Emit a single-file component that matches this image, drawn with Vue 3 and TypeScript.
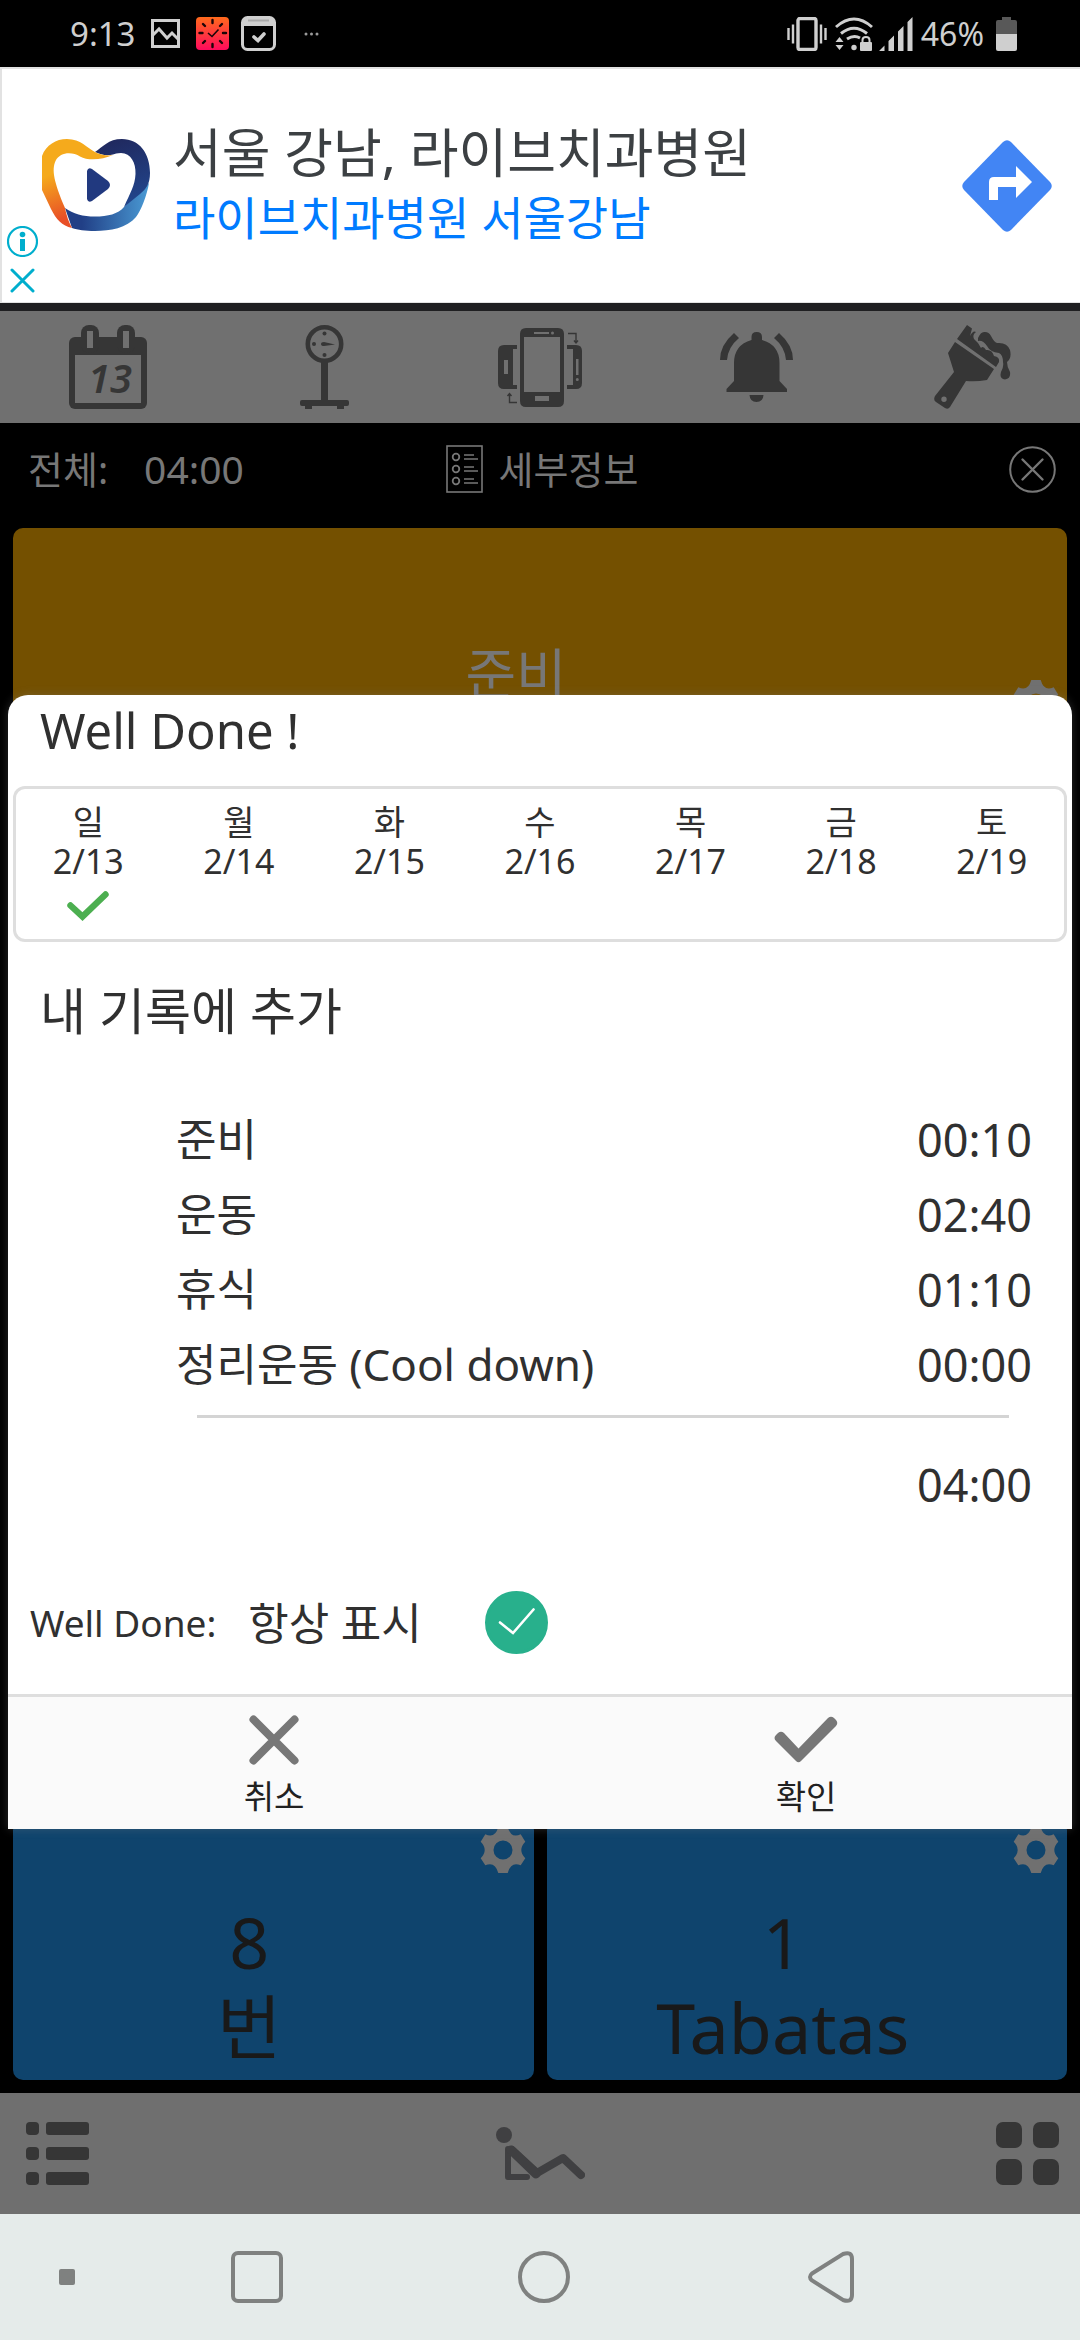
<script setup lang="ts">
import { ref } from 'vue'

interface Day {
  name: string
  date: string
  done: boolean
}

interface Segment {
  label: string
  time: string
}

interface Counter {
  value: string
  unit: string
}

const week: Day[] = [
  { name: '일', date: '2/13', done: true },
  { name: '월', date: '2/14', done: false },
  { name: '화', date: '2/15', done: false },
  { name: '수', date: '2/16', done: false },
  { name: '목', date: '2/17', done: false },
  { name: '금', date: '2/18', done: false },
  { name: '토', date: '2/19', done: false },
]

const segments: Segment[] = [
  { label: '준비', time: '00:10' },
  { label: '운동', time: '02:40' },
  { label: '휴식', time: '01:10' },
  { label: '정리운동 (Cool down)', time: '00:00' },
]

const counters: Counter[] = [
  { value: '8', unit: '번' },
  { value: '1', unit: 'Tabatas' },
]

const gearPath =
  'M18.3 0H27.7Q31 12 40.7 7.3L45.3 14.7Q37.3 23 45.3 31.3L40.7 38.3Q31 34 27.7 46H18.3Q15 34 5.3 38.3L.7 31.3Q8.7 23 .7 14.7L5.3 7.3Q15 12 18.3 0ZM23 13.5a9.5 9.5 0 1 0 0 19a9.5 9.5 0 1 0 0-19Z'

const alwaysShow = ref(true)
</script>

<template>
  <div class="page">
    <header class="status">
      <span class="clock">9:13</span>
      <svg class="st-image" width="29" height="29" viewBox="0 0 29 29" fill="none" stroke="#cfcfcf">
        <rect x="1.5" y="1.5" width="26" height="26" stroke-width="3" />
        <path d="M1 17L8 10L16 19L21 14L28 21" stroke-width="3" />
      </svg>
      <svg class="st-watch" width="33" height="33" viewBox="0 0 33 33">
        <defs>
          <linearGradient id="watch" x1="0" y1="0" x2="0" y2="1">
            <stop offset="0" stop-color="#ff6a1c" />
            <stop offset="1" stop-color="#ff0a5c" />
          </linearGradient>
        </defs>
        <rect width="33" height="33" rx="4" fill="url(#watch)" />
        <path d="M12 16L16 19.500L22.500 12.500" fill="none" stroke="#1a0508" stroke-width="1.600" />
        <path d="M16.500 3v3M16.500 27v3M3.500 16h3M27 16h3M7 7l2 2M24 9l2-2M7 26l2-2M24 24l2 2" stroke="#1a0508" stroke-width="2.400" stroke-linecap="round" />
      </svg>
      <svg class="st-cal" width="35" height="35" viewBox="0 0 35 35">
        <rect x="1.500" y="1.500" width="32" height="32" rx="5" fill="#000" stroke="#cfcfcf" stroke-width="3" />
        <path d="M2 10V5Q2 2 5 2H30Q33 2 33 5V10Z" fill="#cfcfcf" />
        <path d="M7 4.500H28" stroke="#aaa" stroke-width="2" />
        <path d="M13 21L17 24.500L23 18" fill="none" stroke="#cfcfcf" stroke-width="3.600" stroke-linecap="round" />
      </svg>
      <svg class="st-more" width="15" height="4" viewBox="0 0 15 4" fill="#9a9a9a">
        <circle cx="2" cy="2" r="1.500" /><circle cx="7.500" cy="2" r="1.500" /><circle cx="13" cy="2" r="1.500" />
      </svg>
      <svg class="st-vibrate" width="40" height="34" viewBox="0 0 40 34">
        <rect x="11" y="1.500" width="18" height="31" rx="2" fill="none" stroke="#cfcfcf" stroke-width="3.400" />
        <path d="M1.500 11V23M6 7.500V26.500M34 7.500V26.500M38.500 11V23" stroke="#cfcfcf" stroke-width="2.400" />
      </svg>
      <svg class="st-wifi" width="38" height="34" viewBox="0 0 38 34">
        <g fill="none" stroke="#cfcfcf" stroke-width="3">
          <path d="M1 10Q19-6 37 10" /><path d="M6 16.500Q19 6 32 16.500" /><path d="M12 22Q19 17.500 25 21" />
        </g>
        <circle cx="19" cy="30.500" r="2.700" fill="#cfcfcf" />
        <path d="M.500 25L4.500 20L8.500 25ZM.500 28L4.500 33L8.500 28Z" fill="#cfcfcf" />
        <rect x="25" y="25" width="12" height="9" rx="1" fill="#cfcfcf" />
        <path d="M27.500 26V23Q27.500 20 31 20T34.500 23V26" fill="none" stroke="#cfcfcf" stroke-width="2" />
      </svg>
      <svg class="st-signal" width="34" height="34" viewBox="0 0 34 34" fill="#cfcfcf">
        <path d="M0 34L5.500 28.500V34ZM9.500 24L15 18.500V34H9.500ZM19 14.500L24.500 9V34H19ZM28.500 5L33.500 0V34H28.500Z" />
      </svg>
      <span class="percent">46%</span>
      <svg class="st-battery" width="21" height="34" viewBox="0 0 21 34">
        <path d="M6 0H15V3H19Q21 3 21 5V18H0V5Q0 3 2 3H6Z" fill="#585858" />
        <path d="M0 17H21V32Q21 34 19 34H2Q0 34 0 32Z" fill="#cfcfcf" />
      </svg>
    </header>

    <aside class="ad">
      <svg class="ad-logo" width="108" height="93" viewBox="0 0 108 93">
        <defs>
          <linearGradient id="orange" x1="0" y1="0" x2=".3" y2="1">
            <stop offset=".4" stop-color="#f5aa1c" />
            <stop offset=".9" stop-color="#e84f27" />
          </linearGradient>
          <linearGradient id="navy" x1="0" y1="0" x2=".3" y2="1">
            <stop offset="0" stop-color="#20265a" />
            <stop offset="1" stop-color="#214389" />
          </linearGradient>
          <linearGradient id="blue" x1="0" y1="0" x2="1" y2="0">
            <stop offset=".2" stop-color="#213f86" />
            <stop offset="1" stop-color="#4a9ad4" />
          </linearGradient>
        </defs>
        <path d="M107 44C105 56 99 72 94 78C85 89 68 92 53 92C43 92 36 91 30 89L23 69C31 75 41 77.500 53 77.500C66 77.500 76 75 82 68Z" fill="url(#blue)" />
        <path d="M53 13C61 8 66 0 80 0C97 0 108 14 108 34C108 45 104 50 98 55L82 68C88 54 93 47 93.500 35C94 24 89 14 79 14C75 14 73 15 71 15.500C65 17 59 16 53 13Z" fill="url(#navy)" />
        <path d="M71 16C60 21 46 22 38 17.500C30 12.500 18 13 13.500 22C9.500 31 12 43 23 69Q25 80 30 89C20 87 14 80 9 70L0 51V17C4 6 14 0 25 0C39 0 45 9 53 13C58 16 66 17 71 16Z" fill="url(#orange)" />
        <path d="M45 32Q46 28 50 30L66 42Q70 46 66 50L50 62Q46 64 45 60Z" fill="#21397f" />
      </svg>
      <div class="ad-text">
        <p class="ad-title">서울 강남, 라이브치과병원</p>
        <a class="ad-link" href="#">라이브치과병원 서울강남</a>
      </div>
      <svg class="ad-route" width="90" height="92" viewBox="0 0 90 92">
        <path d="M41 2Q45-1.500 49 2L88 42Q91.500 46 88 50L49 90Q45 93.500 41 90L2 50Q-1.500 46 2 42Z" fill="#4285f4" />
        <path d="M27 60V42Q27 37 32 37H54V26L70 42L54 58V47H36V60Z" fill="#fff" />
      </svg>
      <div class="ad-choices">
        <svg width="31" height="31" viewBox="0 0 31 31">
          <circle cx="15.500" cy="15.500" r="14.500" fill="none" stroke="#00aecd" stroke-width="2.200" />
          <circle cx="15.500" cy="8.500" r="2.800" fill="#00aecd" />
          <rect x="13" y="13" width="5" height="12" fill="#00aecd" />
        </svg>
        <svg width="25" height="25" viewBox="0 0 25 25">
          <path d="M2 2L23 23M23 2L2 23" stroke="#00aecd" stroke-width="3" stroke-linecap="round" />
        </svg>
      </div>
    </aside>

    <section class="app">
      <nav class="toolbar">
        <button type="button" aria-label="calendar">
          <svg width="78" height="84" viewBox="0 0 78 84">
            <rect y="12" width="78" height="72" rx="6" fill="#363636" />
            <rect x="12" width="18" height="28" rx="8" fill="#363636" />
            <rect x="48" width="18" height="28" rx="8" fill="#363636" />
            <path d="M18 6h6v17h-6ZM54 6h6v17h-6ZM6 30H72V78H6Z" fill="#707070" />
            <text x="41" y="68" text-anchor="middle" class="cal-number">13</text>
          </svg>
        </button>
        <button type="button" aria-label="weight">
          <svg width="49" height="84" viewBox="0 0 49 84" fill="#363636">
            <circle cx="24.500" cy="19" r="16.700" fill="none" stroke="#363636" stroke-width="4.600" />
            <circle cx="24.500" cy="8.500" r="2" /><circle cx="24.500" cy="30" r="2" /><circle cx="14" cy="19" r="2" />
            <path d="M35 19.500L24 21Q21 21 21 19T24 17Z" />
            <path d="M21 36H28V75H47Q49 75 49 77V79Q49 81 47 81H44V84H37V81H12V84H5V81H2Q0 81 0 79V77Q0 75 2 75H21Z" />
          </svg>
        </button>
        <button type="button" aria-label="rotate">
          <svg width="84" height="79" viewBox="0 0 84 79" fill="#363636">
            <path fill-rule="evenodd" d="M28 0H60Q66 0 66 6V73Q66 79 60 79H28Q22 79 22 73V6Q22 0 28 0ZM26 9V64H62V9ZM36 4V6H51V4ZM54.500 3.500a1.500 1.500 0 1 0 0 3a1.500 1.500 0 1 0 0-3ZM37 68V73H51V68Z" />
            <path fill-rule="evenodd" d="M6 17H19V21H15V57H19V61H6Q0 61 0 55V23Q0 17 6 17ZM6 32V46H10V32Z" />
            <path fill-rule="evenodd" d="M69 17H78Q84 17 84 23V55Q84 61 78 61H69V57H75V21H69ZM78 31V47H80.500V31ZM79.300 50a1.500 1.500 0 1 0 0 3a1.500 1.500 0 1 0 0-3Z" />
            <path d="M19 74.500H11.500V66M9.500 68L11.500 65.500L13.500 68M70 5.500H78V14M76 12.500L78 15L80 12.500" fill="none" stroke="#363636" stroke-width="1.400" />
          </svg>
        </button>
        <button type="button" aria-label="alarm">
          <svg width="73" height="70" viewBox="0 0 73 70" fill="#363636">
            <path d="M31.500 8V5Q31.500 0 36.700 0T42 5V8Q59.500 13 59.500 31V49L67 57V60H6.500V57L14 49V31Q14 13 31.500 8ZM29.500 63H43.500Q43 70 36.500 70T29.500 63Z" />
            <path d="M0 28Q0 13 14 1L19 6Q8 15 7 28ZM73 28Q73 13 59 1L54 6Q65 15 66 28Z" />
          </svg>
        </button>
        <button type="button" aria-label="theme">
          <svg width="77" height="84" viewBox="0 0 77 84" fill="#363636">
            <path fill-rule="evenodd" d="M21 17L60 44L53 55Q42 57 32 56L16 82Q14 85 11 83L2 77Q-1 75 1 71L20 47L14 28ZM10 71.500a2.700 2.700 0 1 0 0 5.400a2.700 2.700 0 1 0 0-5.400Z" />
            <path d="M23 14L33 0L38 3.500L36 11Q39 5 42 7Q38 10 40 14Q44 17 47 23Q49 20 52 25Q58 24 60 31Q66 32 65 37L62 42Z" />
            <path d="M44 13Q47 6 51 7Q55 7 57 11Q60 17 63 18Q73 17 76 25Q78 33 73 37Q73 42 76 47Q77 54 71 54.500Q65 54 67 47Q70 42 69 37Q69 30 65 28Q56 27 53 21Q49 15 44 16Z" />
          </svg>
        </button>
      </nav>

      <div class="summary">
        <div class="total">
          <span>전체:</span>
          <span class="total-time">04:00</span>
        </div>
        <button type="button" class="details">
          <svg width="37" height="48" viewBox="0 0 37 48" fill="none" stroke="#777">
            <rect x="1" y="1" width="35" height="46" stroke-width="1.600" />
            <g stroke-width="1.800">
              <circle cx="10" cy="12" r="3.300" /><circle cx="10" cy="24" r="3.300" /><circle cx="10" cy="36" r="3.300" />
            </g>
            <path d="M18 10H28M18 14H32M18 22H28M18 26H32M18 34H28M18 38H32" stroke-width="1.400" />
          </svg>
          <span>세부정보</span>
        </button>
        <button type="button" class="close" aria-label="close">
          <svg width="47" height="47" viewBox="0 0 47 47" fill="none" stroke="#777" stroke-width="2">
            <circle cx="23.500" cy="23.500" r="22.300" />
            <path d="M13.500 13.500L33.500 33.500M33.500 13.500L13.500 33.500" stroke-width="2.400" stroke-linecap="round" />
          </svg>
        </button>
      </div>

      <main class="cards">
        <article class="card prepare">
          <h2 class="card-name">준비</h2>
          <svg class="gear" width="46" height="46" viewBox="0 0 46 46"><path fill-rule="evenodd" :d="gearPath" /></svg>
        </article>
        <div class="counters">
          <article v-for="counter in counters" :key="counter.unit" class="card counter">
            <p class="count">{{ counter.value }}<br />{{ counter.unit }}</p>
            <svg class="gear" width="46" height="46" viewBox="0 0 46 46"><path fill-rule="evenodd" :d="gearPath" /></svg>
          </article>
        </div>
      </main>

      <nav class="tabs">
        <button type="button" class="tab-list" aria-label="list">
          <svg width="63" height="63" viewBox="0 0 63 63" fill="#363636">
            <g v-for="y in [0, 25, 50]" :key="y">
              <rect :y="y" width="13" height="13" rx="4" />
              <rect x="20" :y="y" width="43" height="13" rx="3" />
            </g>
          </svg>
        </button>
        <button type="button" aria-label="workout">
          <svg width="89" height="60" viewBox="0 0 89 60" fill="none" stroke="#404042" stroke-linecap="round" stroke-linejoin="round">
            <circle cx="8" cy="11" r="8" fill="#404042" stroke="none" />
            <path d="M12 25V53H31" stroke-width="6" />
            <path d="M16 26L41 49L67 34L85 51" stroke-width="8" />
            <path d="M15 26L40 50" stroke-width="9" />
          </svg>
        </button>
        <button type="button" class="tab-grid" aria-label="apps">
          <svg width="63" height="63" viewBox="0 0 63 63" fill="#363636">
            <rect width="26" height="26" rx="7" /><rect x="37" width="26" height="26" rx="7" />
            <rect y="37" width="26" height="26" rx="7" /><rect x="37" y="37" width="26" height="26" rx="7" />
          </svg>
        </button>
      </nav>

      <div class="overlay">
        <div class="dialog" role="dialog" aria-labelledby="dialog-title">
          <h1 id="dialog-title" class="heading">Well Done !</h1>

          <table class="week">
            <thead>
              <tr>
                <th v-for="day in week" :key="day.date" scope="col">{{ day.name }}<br />{{ day.date }}</th>
              </tr>
            </thead>
            <tbody>
              <tr>
                <td v-for="day in week" :key="day.date">
                  <svg v-if="day.done" width="44" height="32" viewBox="0 0 44 32">
                    <path d="M4.500 15.500L16.500 26.500L39.500 4.500" fill="none" stroke="#4caf50" stroke-width="6.400" stroke-linecap="round" />
                  </svg>
                </td>
              </tr>
            </tbody>
          </table>

          <h2 class="heading record">내 기록에 추가</h2>

          <table class="segments">
            <tbody>
              <tr v-for="segment in segments" :key="segment.label">
                <th scope="row">{{ segment.label }}</th>
                <td>{{ segment.time }}</td>
              </tr>
            </tbody>
          </table>
          <hr class="rule" />
          <p class="sum">04:00</p>

          <div class="always">
            <span class="always-title">Well Done:</span>
            <label class="always-label" for="always">항상 표시</label>
            <span class="toggle">
              <input id="always" v-model="alwaysShow" type="checkbox" />
              <svg v-if="alwaysShow" width="63" height="63" viewBox="0 0 63 63">
                <path d="M15 31.500L28 42L48.500 18.500" fill="none" stroke="#fff" stroke-width="2.600" stroke-linecap="round" />
              </svg>
            </span>
          </div>

          <footer class="actions">
            <button type="button">
              <svg width="50" height="50" viewBox="0 0 50 50">
                <path d="M4.500 4.500L45.500 45.500M45.500 4.500L4.500 45.500" stroke="#777" stroke-width="8" stroke-linecap="round" />
              </svg>
              <span>취소</span>
            </button>
            <button type="button">
              <svg width="64" height="50" viewBox="0 0 64 50">
                <path d="M2 20Q-1 23 2 26L22 46Q24.500 48.500 27 46L62 11Q64.500 8 62 5L60 3Q57 .500 54 3L24.500 33.500L10 18Q7 15.500 4 18Z" fill="#777" />
              </svg>
              <span>확인</span>
            </button>
          </footer>
        </div>
      </div>
    </section>

    <nav class="system">
      <svg width="16" height="16" viewBox="0 0 16 16"><rect width="16" height="16" rx="2" fill="#7f8180" /></svg>
      <svg width="52" height="52" viewBox="0 0 52 52" fill="none" stroke="#7f8180" stroke-width="4"><rect x="2" y="2" width="48" height="48" rx="5" /></svg>
      <svg width="52" height="52" viewBox="0 0 52 52" fill="none" stroke="#7f8180" stroke-width="4"><circle cx="26" cy="26" r="24" /></svg>
      <svg width="46" height="52" viewBox="0 0 46 52" fill="none" stroke="#7f8180" stroke-width="4"><path d="M4 22.500L35 3Q44 0 44 8V44Q44 52 35 49L4 29.500Q0 26 4 22.500Z" /></svg>
    </nav>
  </div>
</template>

<style>
body {
  margin: 0;
  background: #000;
}
</style>

<style scoped>
.page {
  display: flex;
  flex-direction: column;
  min-height: 100vh;
  font-family: 'Noto Sans', 'Noto Sans CJK KR', sans-serif;
  color: #303030;
}

svg {
  display: block;
  flex: none;
}

p,
h1,
h2 {
  margin: 0;
  font-weight: 400;
}

button {
  padding: 0;
  border: 0;
  background: none;
  font: inherit;
  color: inherit;
}

/* Status bar */
.status {
  display: flex;
  align-items: center;
  height: 67px;
  padding: 0 63px 0 70px;
  background: #000;
  color: #cfcfcf;
  font-size: 33px;
  line-height: 40px;
}

.st-image {
  margin-left: 16px;
}

.st-watch {
  margin-left: 16px;
}

.st-cal {
  margin-left: 12px;
}

.st-more {
  margin-left: 28px;
}

.st-vibrate {
  margin-left: auto;
}

.st-wifi {
  margin-left: 8px;
}

.st-signal {
  margin-left: 6px;
}

.percent {
  margin-left: 8px;
  font-size: 32px;
}

.st-battery {
  margin-left: 12px;
}

/* Advertisement */
.ad {
  position: relative;
  display: flex;
  align-items: center;
  box-sizing: border-box;
  height: 236px;
  padding: 0 28px 0 40px;
  border: solid #e2e2e2;
  border-width: 2px 0 1px 2px;
  background: #fff;
}

.ad-text {
  flex: 1;
  margin-left: 23px;
  padding-bottom: 4px;
}

.ad-title {
  font-size: 53px;
  line-height: 66px;
  color: #3c4043;
}

.ad-link {
  display: block;
  font-size: 46px;
  line-height: 62px;
  color: #007bff;
  text-decoration: none;
}

.ad-choices {
  position: absolute;
  left: 5px;
  bottom: 9px;
  display: flex;
  flex-direction: column;
  align-items: center;
  gap: 11px;
}

/* Application */
.app {
  position: relative;
  flex: 1;
  display: flex;
  flex-direction: column;
  border-top: 8px solid #1f1f21;
  background: #000;
}

.toolbar {
  display: grid;
  grid-template-columns: repeat(5, 1fr);
  height: 112px;
  background: #707070;
}

.toolbar button {
  display: grid;
  place-items: center;
}

.cal-number {
  font-size: 40px;
  font-weight: 600;
  font-style: italic;
  fill: #363636;
}

.summary {
  display: grid;
  grid-template-columns: 1fr auto 1fr;
  align-items: center;
  height: 92px;
  margin-bottom: 13px;
  padding: 0 24px 0 28px;
  color: #777;
  font-size: 38px;
  line-height: 48px;
}

.total {
  display: flex;
  gap: 36px;
}

.total-time {
  font-size: 39px;
}

.details {
  display: flex;
  align-items: center;
  gap: 16px;
}

.close {
  justify-self: end;
}

.cards {
  flex: 1;
  display: flex;
  flex-direction: column;
  justify-content: space-between;
  padding: 0 13px 13px;
}

.card {
  display: flex;
  border-radius: 10px;
  padding: 0 8px 10px 14px;
}

.prepare {
  height: 280px;
  background: #745000;
}

.card-name {
  flex: 1;
  padding: 102px 8px 0 0;
  font-size: 55px;
  line-height: 85px;
  text-align: center;
  color: #777;
}

.gear {
  fill: #707070;
}

.prepare .gear {
  margin-top: 152px;
}

.counters {
  display: grid;
  grid-template-columns: 1fr 1fr;
  gap: 13px;
}

.counter {
  min-height: 250px;
  background: #0f446d;
}

.counter .gear {
  margin-top: 7px;
}

.count {
  flex: 1;
  align-self: flex-end;
  padding-right: 8px;
  font-size: 70px;
  line-height: 85px;
  text-align: center;
  color: #191919;
}

.tabs {
  display: grid;
  grid-template-columns: 1fr auto 1fr;
  align-items: center;
  height: 121px;
  padding: 0 21px;
  background: #6f6f6f;
}

.tab-list {
  justify-self: start;
  padding-left: 5px;
}

.tab-grid {
  justify-self: end;
}

/* Completion dialog */
.overlay {
  position: absolute;
  inset: 0;
  display: flex;
  align-items: center;
  padding: 0 8px 2px;
}

.dialog {
  flex: 1;
  border-radius: 20px 20px 0 0;
  background: #fff;
  box-shadow: 0 0 10px rgba(140, 140, 140, 0.3);
}

.heading {
  padding: 0 32px;
  font-size: 49px;
  line-height: 70px;
}

.week {
  width: calc(100% - 10px);
  height: 156px;
  margin: 21px 5px 0;
  padding: 17px 0 20px;
  border-collapse: separate;
  border-spacing: 0;
  table-layout: fixed;
  border-radius: 12px;
  box-shadow: inset 0 0 0 3px #dedede;
  font-size: 34px;
  line-height: 39px;
}

.week th {
  padding: 0;
  font-weight: 400;
}

.week td {
  height: 41px;
  padding: 0;
  vertical-align: bottom;
}

.week svg {
  margin: 0 auto;
}

.record {
  margin-top: 34px;
  font-size: 50px;
}

.segments {
  width: 100%;
  margin-top: 56px;
  padding: 0 40px 0 168px;
  border-spacing: 0;
  font-size: 45px;
  line-height: 75px;
}

.segments th {
  padding: 0;
  font-size: 44px;
  font-weight: 400;
  text-align: left;
}

.segments td {
  padding: 0;
  text-align: right;
}

.rule {
  height: 3px;
  margin: 13px 63px 0 189px;
  border: 0;
  background: #d4d4d4;
}

.sum {
  margin-top: 29px;
  padding-right: 40px;
  font-size: 45px;
  line-height: 75px;
  text-align: right;
}

.always {
  display: flex;
  align-items: center;
  margin: 69px 0 39px;
  padding-left: 22px;
}

.always-title {
  font-size: 37px;
  line-height: 64px;
}

.always-label {
  margin: 0 63px 0 32px;
  font-size: 44px;
  line-height: 64px;
}

.toggle {
  display: grid;
}

.toggle input,
.toggle svg {
  grid-area: 1 / 1;
  width: 63px;
  height: 63px;
}

.toggle input {
  margin: 0;
  appearance: none;
  border: 3px solid #28b08c;
  border-radius: 50%;
}

.toggle input:checked {
  background: #28b08c;
}

.toggle svg {
  pointer-events: none;
}

.actions {
  display: grid;
  grid-template-columns: 1fr 1fr;
  border-top: 3px solid #dedede;
  background: #fafafa;
  color: #212121;
}

.actions button {
  display: flex;
  flex-direction: column;
  align-items: center;
  gap: 12px;
  padding: 18px 0 12px;
  font-size: 33px;
  line-height: 40px;
}

/* System navigation */
.system {
  display: grid;
  grid-template-columns: 134fr 246fr 328fr 246fr 126fr;
  place-items: center;
  height: 126px;
  background: #e5ebea;
}
</style>
